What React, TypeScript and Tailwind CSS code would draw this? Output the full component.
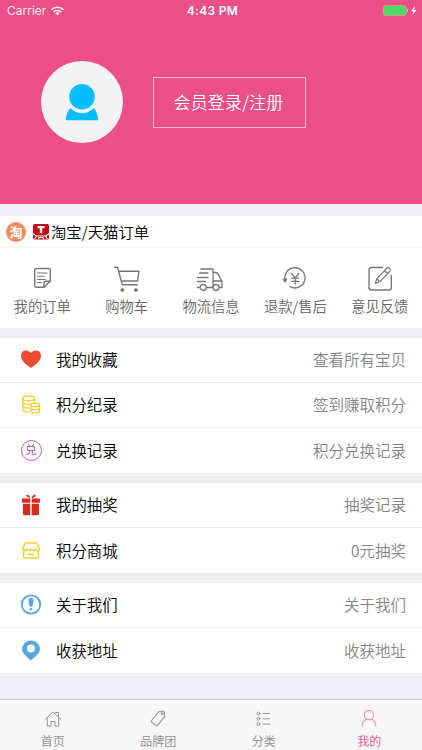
import React from 'react';

type IconProps = { children: React.ReactNode; w?: number; h?: number; sw?: number; className?: string };

function Icon({ children, w = 30, h = 30, sw = 1.4, className = '' }: IconProps) {
  return (
    <svg
      width={w}
      height={h}
      viewBox={`0 0 ${w} ${h}`}
      fill="none"
      stroke="currentColor"
      strokeWidth={sw}
      strokeLinecap="round"
      strokeLinejoin="round"
      className={`block shrink-0 ${className}`}
    >
      {children}
    </svg>
  );
}

const orders = [
  {
    label: '我的订单',
    icon: (
      <Icon>
        <path d="M9.500 5.500h12a1.800 1.800 0 0 1 1.800 1.800v10.900l-6.200 6.100H9.500a1.800 1.800 0 0 1-1.800-1.800V7.300a1.800 1.800 0 0 1 1.800-1.800zM17 24v-3.800a2 2 0 0 1 2-2h4" />
        <path strokeWidth={1.1} d="M10.500 10h9.500M10.500 13.200h6.500M10.500 16.500h8M10.500 19.500h4" />
      </Icon>
    ),
  },
  {
    label: '购物车',
    icon: (
      <Icon>
        <path d="M2.800 4.200h2.700l4.800 17.500h15M6.800 8.300h20.200l-1.500 9.700H9.500" />
        <circle cx="10.300" cy="27" r="1.400" fill="currentColor" strokeWidth={1} />
        <circle cx="23.800" cy="27" r="1.400" fill="currentColor" strokeWidth={1} />
      </Icon>
    ),
  },
  {
    label: '物流信息',
    icon: (
      <Icon sw={1.300}>
        <path d="M5 6h12v18.500M17 9.500h2.500c2 0 2.800 1.300 3.600 3.200l1.500 3.400c.8 1 1.400 1.600 1.400 3v5.400h-2.500M17 18h9M3.500 10h8.500M1.500 14.500h10.600M1.500 18.500h7.800M1.500 24.500h2.200M10.600 24.500h6" />
        <circle cx="7.200" cy="24.500" r="3" />
        <circle cx="20" cy="24.500" r="3" />
      </Icon>
    ),
  },
  {
    label: '退款/售后',
    icon: (
      <Icon sw={1.300}>
        <path d="M5.400 18.300A10.100 10.100 0 1 1 9.700 23.500M3.300 16.500l1.900 2.400 1.300-2.900zM11.500 10.500l3.700 4.500 3.700-4.500M11.500 15.200h7.400M11.500 18.300h7.400M15.200 15.200v6" />
      </Icon>
    ),
  },
  {
    label: '意见反馈',
    icon: (
      <Icon>
        <path d="M17.500 4.500H6.500A2.500 2.500 0 0 0 4 7v17.500A2.500 2.500 0 0 0 6.500 27h17.300a2.500 2.500 0 0 0 2.500-2.500V12.500" />
        <path strokeWidth={1.200} d="M11.800 15.800l9.800-10.300a1.900 1.900 0 0 1 3-.1 2 2 0 0 1 0 3.100L14.900 18.700l-4.500 1.600zM19.600 7.600l3 2.900M11.800 15.800l3 2.900" />
      </Icon>
    ),
  },
];

const HeartIcon = (
  <Icon w={22} h={22}>
    <path d="M11 19C7.500 16.300 1 12.200 1 6.900c0-6.400 7.600-7.100 10-2.600 2.400-4.500 10-3.800 10 2.600 0 5.300-6.500 9.400-10 12.100z" fill="#ee4b32" stroke="none" />
  </Icon>
);

const CoinsIcon = (
  <Icon w={22} h={22} sw={1.300} className="text-[#f3cd2a]">
    <ellipse cx="8.800" cy="4.400" rx="5.900" ry="2.400" />
    <path d="M2.900 4.400v11c0 1.500 2.200 2.400 5.700 2.500M14.700 4.400v3.600M2.900 8c0 1.700 3.500 2.700 7.300 2.300M2.900 11.800c0 1.500 3 2.300 6 2.300" />
    <ellipse cx="15.200" cy="11" rx="4.400" ry="1.700" />
    <path d="M10.800 11v6.300c0 2.300 8.800 2.300 8.800 0V11M10.800 14.200c0 2.200 8.800 2.200 8.800 0" />
  </Icon>
);

const ExchangeIcon = (
  <div className="flex size-[21px] items-center justify-center rounded-full border border-[#a562c8] text-[11.500px] leading-none text-[#a050c8]">
    <span className="-mt-px">兑</span>
  </div>
);

const GiftIcon = (
  <Icon w={22} h={22}>
    <g fill="#d9291c" stroke="none">
      <path d="M2 4.500h8.200v4.300H2zM11.700 4.500h8.200v4.300h-8.200zM3 9.800h7.200v11.500H4.500A1.500 1.500 0 0 1 3 19.800zM11.700 9.800H19v10a1.500 1.500 0 0 1-1.500 1.500h-5.800z" />
      <path d="M10.300 4C9.500 2 8.500.8 6.500.5L6.300 2l2.800 2zM11.500 4c.8-2 2-3.200 4-3.500l.2 1.500L13 4z" />
    </g>
  </Icon>
);

const ShopIcon = (
  <Icon w={22} h={22} className="text-[#f3cd2a]">
    <path
      strokeWidth={1.500}
      d="M5.500 3h11l2.900 5.700c-.2 2.400-3.800 2.500-4.500.4-.8 2-3.500 2-4.100 0-.8 2-3.400 2-4.100 0-.7 2-4 1.900-4.200-.4zM3.600 11v5.700a1.200 1.200 0 0 0 1.200 1.200h12.400a1.200 1.200 0 0 0 1.200-1.200V11M8.500 14.500h5"
    />
  </Icon>
);

const AboutIcon = (
  <Icon w={22} h={22}>
    <circle cx="11" cy="10.500" r="9.200" stroke="#57a7de" strokeWidth={1.800} />
    <path d="M11 4c1.900 0 2.800.9 2.600 2.500l-1.300 6.200H9.700L8.400 6.500C8.200 4.900 9.100 4 11 4z" fill="#57a7de" stroke="none" />
    <circle cx="11" cy="15.200" r="1.300" fill="#57a7de" stroke="none" />
  </Icon>
);

const PinIcon = (
  <Icon w={22} h={22}>
    <path
      fillRule="evenodd"
      fill="#57a7de"
      stroke="none"
      d="M11 20.500C7 16.700 2.100 13.300 2.100 8.900a8.900 8.500 0 0 1 17.800 0c0 4.400-4.900 7.800-8.900 11.600zM11 4.500a4 4 0 1 0 0 8 4 4 0 0 0 0-8z"
    />
  </Icon>
);

const groups = [
  [
    { icon: HeartIcon, label: '我的收藏', value: '查看所有宝贝' },
    { icon: CoinsIcon, label: '积分纪录', value: '签到赚取积分' },
    { icon: ExchangeIcon, label: '兑换记录', value: '积分兑换记录' },
  ],
  [
    { icon: GiftIcon, label: '我的抽奖', value: '抽奖记录' },
    { icon: ShopIcon, label: '积分商城', value: '0元抽奖' },
  ],
  [
    { icon: AboutIcon, label: '关于我们', value: '关于我们' },
    { icon: PinIcon, label: '收获地址', value: '收获地址' },
  ],
];

const tabs = [
  {
    label: '首页',
    icon: (
      <Icon w={20} h={20} sw={1}>
        <path d="M2.200 10.300L10 3l7.800 7.300M4.300 9.500V17H8v-4.500h4V17h3.700V9.500M12.500 3.500h3v4" />
      </Icon>
    ),
  },
  {
    label: '品牌团',
    icon: (
      <Icon w={20} h={20} sw={1.100}>
        <path d="M10.500 3l4.300-1c1 0 1.500.5 1.600 1.400l.2 4.200-6.900 8.600a1.300 1.300 0 0 1-1.900.2l-4-3a1.300 1.300 0 0 1-.2-1.900z" />
        <circle cx="14" cy="4.600" r="1.100" strokeWidth={0.9} />
      </Icon>
    ),
  },
  {
    label: '分类',
    icon: (
      <Icon w={20} h={20} sw={1}>
        <circle cx="4.500" cy="4.500" r="1.400" />
        <circle cx="4.500" cy="9.800" r="1.400" />
        <circle cx="4.500" cy="15.100" r="1.400" />
        <path d="M9 4.500h6.500M9 9.800h6.500M9 15.100h6.500" />
      </Icon>
    ),
  },
  {
    label: '我的',
    icon: (
      <Icon w={20} h={20} sw={1.100} className="text-[#f08fb3]">
        <circle cx="10" cy="6" r="4.600" />
        <path d="M3.200 17.300c.1-3.400 1.800-6 4.400-7M16.800 17.300c-.1-3.400-1.800-6-4.400-7" />
      </Icon>
    ),
  },
];

function StatusBar() {
  return (
    <div className="flex h-[22px] items-center pl-[7px] pr-[4px] font-['Inter','Noto_Sans_CJK_SC',sans-serif] text-[12px] text-white">
      <div className="flex flex-1 items-center gap-[5px]">
        <span className="opacity-90">Carrier</span>
        <svg width="13" height="10" viewBox="0 0 13 10" fill="none" stroke="white" strokeWidth="1.500">
          <path d="M.6 3.600a8.500 8.500 0 0 1 11.800 0M2.700 5.900a5.500 5.500 0 0 1 7.600 0" />
          <path d="M6.500 9.400L4.400 7.300a3 3 0 0 1 4.200 0z" fill="white" stroke="none" />
        </svg>
      </div>
      <span className="font-semibold tracking-[0.300px]">4:43 PM</span>
      <div className="flex flex-1 items-center justify-end">
        <svg width="36" height="12" viewBox="0 0 36 12">
          <rect x="1.500" y=".6" width="22.500" height="9.800" rx="1.500" fill="#4cd964" stroke="#c5a28e" strokeWidth="1" />
          <path d="M25 3.800v3.600c1.600-.5 1.600-3.100 0-3.600z" fill="#f4b9ce" />
          <path d="M33 1l-4 5.200h2.300l-1 4L34.600 5h-2.500z" fill="white" />
        </svg>
      </div>
    </div>
  );
}

export default function App() {
  return (
    <div className="flex h-[750px] w-[422px] flex-col overflow-hidden bg-[#efeef4] font-['Noto_Sans_CJK_SC',sans-serif]">
      <header className="h-[204px] shrink-0 bg-[#ec4e87]">
        <StatusBar />
        <div className="flex items-center pl-[41px] pt-[39px]">
          <div className="flex size-[82px] items-center justify-center rounded-full bg-[#f2f2f2]">
            <svg width="34" height="38" viewBox="0 0 34 38" fill="#00bfff">
              <circle cx="17" cy="13.800" r="12.800" />
              <path d="M5.500 25.300a16 16 0 0 0 23 0c2.600 1.800 4 6.500 4.800 12H.7c.8-5.500 2.200-10.200 4.800-12z" />
            </svg>
          </div>
          <button className="ml-[30px] flex h-[51px] w-[153px] items-center justify-center border border-[#f8bed2] pr-[2px] text-[17px] font-[350] tracking-[0.200px] text-white">
            会员登录/注册
          </button>
        </div>
      </header>

      <section className="mt-[12px] h-[112px] shrink-0 bg-white">
        <div className="flex h-[32px] items-center border-b border-[#f2f2f4] pl-[6px]">
          <div className="flex size-[20px] items-center justify-center rounded-full bg-[#f08c5a] text-[13px] font-bold leading-none text-white">
            <span className="-mt-px">淘</span>
          </div>
          <svg className="ml-[7px]" width="16" height="16" viewBox="0 0 16 16">
            <rect width="16" height="15.500" rx="1.500" fill="#c40d18" />
            <path d="M4.500 2h7v2.200H9.200V9H6.800V4.200H4.500z" fill="white" />
            <path d="M0 9.700l3 2.300h10l3-2.300M1.500 15.300l2-3M5.300 15.300l.8-1.800h3.800l.8 1.800M14.500 15.300l-2-3" stroke="white" strokeWidth="1.100" fill="none" />
          </svg>
          <span className="ml-[2px] text-[15.300px] font-[350] leading-none tracking-[0.050px] text-black">淘宝/天猫订单</span>
        </div>
        <div className="flex">
          {orders.map((o) => (
            <div key={o.label} className="flex w-[84.400px] flex-col items-center pt-[15px] text-[#777777]">
              {o.icon}
              <span className="mt-[5px] whitespace-nowrap text-[14.300px] font-[350] leading-[16px] text-[#666666]">{o.label}</span>
            </div>
          ))}
        </div>
      </section>

      {groups.map((rows, i) => (
        <section key={i} className="mt-[10px] shrink-0 divide-y divide-[#ededf0] bg-white">
          {rows.map((r) => (
            <div key={r.label} className="flex h-[45px] items-center pl-[20px] pr-[16px]">
              <div className="flex w-[22px] justify-center">{r.icon}</div>
              <span className="ml-[14px] text-[15.400px] font-[350] text-black">{r.label}</span>
              <span className="ml-auto text-[15.500px] font-[350] text-[#858585]">{r.value}</span>
            </div>
          ))}
        </section>
      ))}

      <nav className="mt-auto flex h-[51px] shrink-0 border-t border-[#cfced3] bg-[#f7f7f8]">
        {tabs.map((t, i) => (
          <div
            key={t.label}
            className={`flex flex-1 flex-col items-center pt-[9px] ${i === 3 ? 'text-[#ec5c94]' : 'text-[#939393]'}`}
          >
            {t.icon}
            <span className="mt-[5px] text-[12px] leading-[14px]">{t.label}</span>
          </div>
        ))}
      </nav>
    </div>
  );
}
